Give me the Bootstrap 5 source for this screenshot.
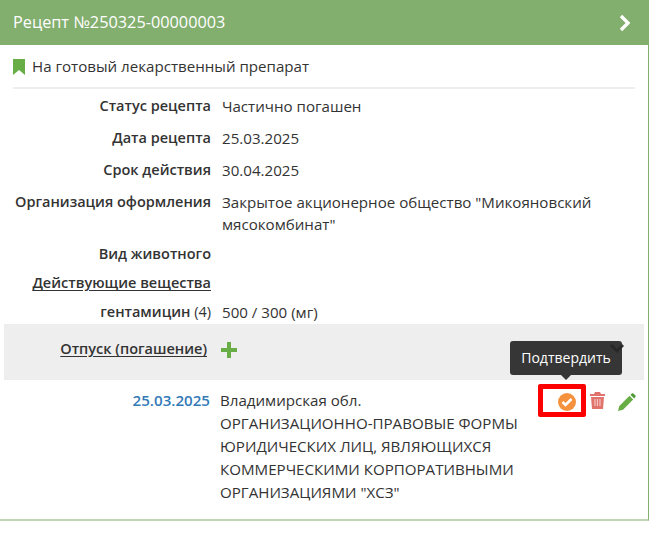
<!DOCTYPE html>
<html lang="ru"><head><meta charset="utf-8">
<link href="https://cdn.jsdelivr.net/npm/bootstrap@5.3.0/dist/css/bootstrap.min.css" rel="stylesheet">
<style>
html,body{height:536px;overflow:hidden;background:#fff}
body{font-family:"Open Sans","Liberation Sans",sans-serif;font-size:15.12px;line-height:22.4px;color:#333}
.rx-panel{width:649px;height:521px;border-right:1px solid #82ae6e;position:relative;border-bottom:2px solid #c0d6b5}
.rx-head{height:45px;background:#82ae6e;color:#fff;font-size:16.3px;padding:0 17px 0 13px}
.rx-body{padding:0 13px}
.rx-kind{height:44px;border-bottom:2px solid #eee;padding-top:1px;gap:7px}
.rx-row{display:flex;gap:11px;padding-bottom:9.6px}
.rx-row.tight{padding-bottom:6.6px}
.rx-row.tighter{padding-bottom:7.6px}
.rx-label{width:198px;flex:none;text-align:right;font-weight:600;font-size:14.5px}
.rx-label u{text-underline-offset:2px}
.rx-first{padding-top:6px}
.rx-out{height:56px;margin:-6px -9px 0;background:#eee;padding:14px 9px 0;display:flex;gap:14px;position:relative}
.rx-out .rx-label{width:194px}
.rx-item{display:flex;gap:10px;padding-top:9px;position:relative}
.rx-date{width:197px;flex:none;text-align:right;font-weight:600;color:#337ab7}
.rx-org{width:310px;line-height:22.8px}
.rx-wide{width:400px;line-height:22.4px}
.rx-hl{position:absolute;left:525px;top:4px;width:48px;height:33px;border:5px solid #f00;border-radius:2px}
.rx-ico{position:absolute;top:13px}
.rx-i1{left:545px}.rx-i2{left:577px;top:12px}.rx-i3{left:605px}
.rx-chev{position:absolute;left:605px;top:20px}
.rx-tip{position:absolute;left:510px;top:341px;width:112px;height:34px;background:rgba(40,40,40,.93);color:#fff;font-size:14px;border-radius:3px;display:flex;align-items:center;justify-content:center}
.rx-tip::after{content:"";position:absolute;left:50%;margin-left:-5px;bottom:-5px;border:5px solid transparent;border-bottom:0;border-top-color:rgba(40,40,40,.93)}
</style></head><body>
<div class="rx-panel">
<div class="rx-head d-flex align-items-center justify-content-between">
<span>Рецепт №250325-00000003</span>
<svg width="12" height="18" viewBox="0 0 12 18"><path d="M2 2l7 7-7 7" fill="none" stroke="#fff" stroke-width="3.4"/></svg>
</div>
<div class="rx-body">
<div class="rx-kind d-flex align-items-center">
<svg width="12" height="16" viewBox="0 0 12 16"><path d="M0 0h12v16l-6-5-6 5z" fill="#68ad45"/></svg>
<span>На готовый лекарственный препарат</span></div>
<div class="rx-row rx-first"><div class="rx-label">Статус рецепта</div><div>Частично погашен</div></div>
<div class="rx-row"><div class="rx-label">Дата рецепта</div><div>25.03.2025</div></div>
<div class="rx-row"><div class="rx-label">Срок действия</div><div>30.04.2025</div></div>
<div class="rx-row tighter"><div class="rx-label">Организация оформления</div><div class="rx-org rx-wide">Закрытое акционерное общество "Микояновский мясокомбинат"</div></div>
<div class="rx-row tight"><div class="rx-label">Вид животного</div><div></div></div>
<div class="rx-row tight"><div class="rx-label"><u>Действующие вещества</u></div><div></div></div>
<div class="rx-row tight"><div class="rx-label">гентамицин <span class="fw-normal">(4)</span></div><div>500 / 300 (мг)</div></div>
<div class="rx-out"><div class="rx-label"><u>Отпуск (погашение)</u></div>
<svg width="16" height="16" viewBox="0 0 16 16" class="mt-1"><path d="M6 0h4v6h6v4h-6v6H6v-6H0V6h6z" fill="#68ad45"/></svg>
<svg class="rx-chev" width="16" height="10" viewBox="0 0 16 10"><path d="M2 1l6 6 6-6" fill="none" stroke="#333" stroke-width="3"/></svg>
</div>
<div class="rx-item"><div class="rx-date">25.03.2025</div>
<div class="rx-org">Владимирская обл.<br>ОРГАНИЗАЦИОННО-ПРАВОВЫЕ ФОРМЫ ЮРИДИЧЕСКИХ ЛИЦ, ЯВЛЯЮЩИХСЯ КОММЕРЧЕСКИМИ КОРПОРАТИВНЫМИ ОРГАНИЗАЦИЯМИ "ХСЗ"</div>
<div class="rx-hl"></div>
<svg class="rx-ico rx-i1" width="18" height="18" viewBox="0 0 18 18"><circle cx="9" cy="9" r="9" fill="#f5923e"/><path d="M4.500 9l3 3 6-6" fill="none" stroke="#fff" stroke-width="2.600"/></svg>
<svg class="rx-ico rx-i2" width="15" height="17" viewBox="0 0 15 17"><path d="M5 0h5l1 2h4v2H0V2h4zM1 5h13l-1 12H2z" fill="#e0736b"/><path d="M5 7v7M7.500 7v7M10 7v7" stroke="#f3c4bf" stroke-width="1.200"/></svg>
<svg class="rx-ico rx-i3" width="18" height="18" viewBox="0 0 18 18"><path d="M0 18l1.300-5L11.500 2.800l3.700 3.700L5 16.700z" fill="#68ad45"/><path d="M12.500 1.800l1.300-1.300q.8-.6 1.600 0l2 2q.6.8 0 1.600l-1.300 1.300z" fill="#4e9a3a"/></svg>
</div>
</div>
<div class="rx-tip">Подтвердить</div>
</div>
</body></html>
